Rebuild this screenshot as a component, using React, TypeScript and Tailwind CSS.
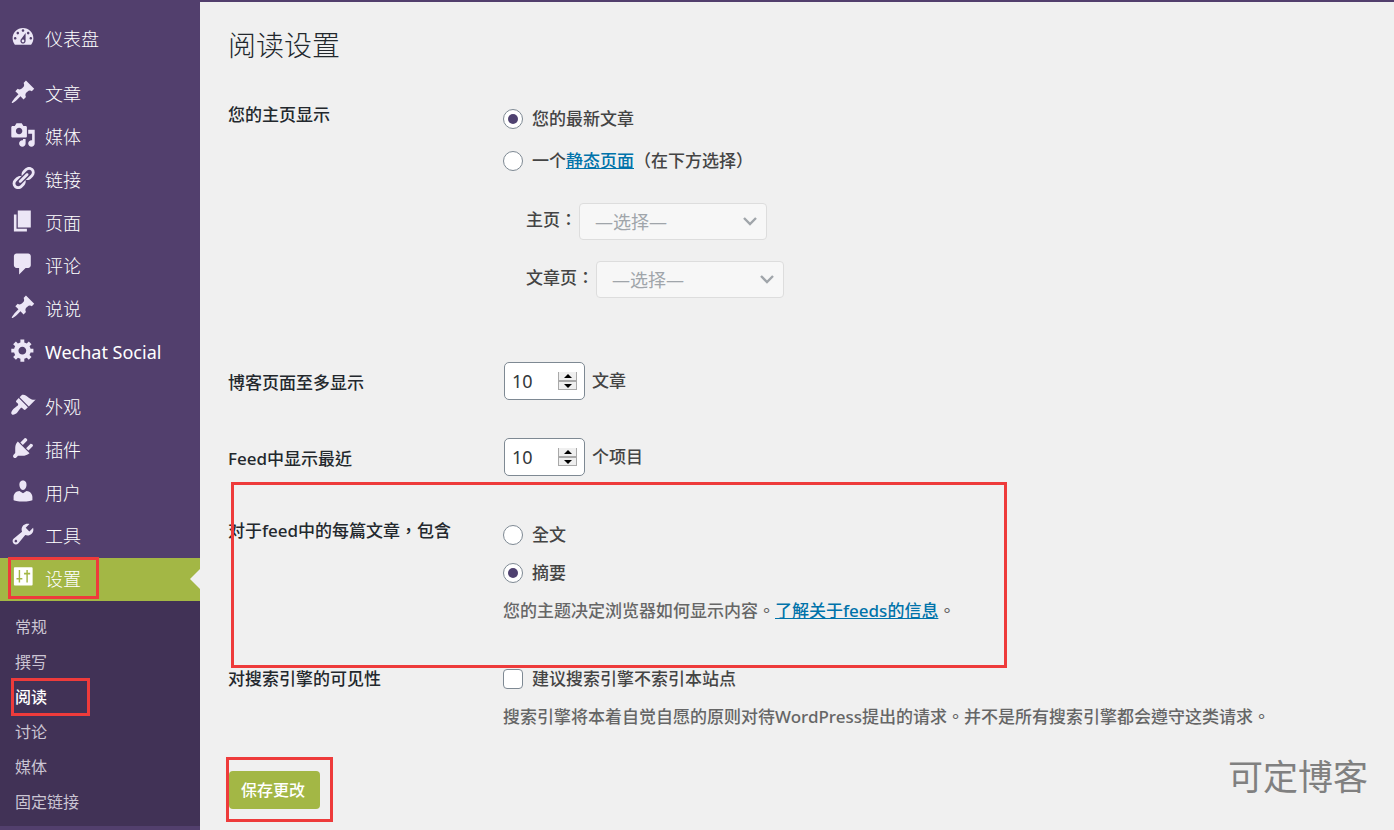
import { useState } from 'react'
import type { ReactNode } from 'react'
import clsx from 'clsx'

const iconPaths: Record<string, string> = {
  dashboard:
    'M3.76 16h12.48c1.1-1.37 1.76-3.11 1.76-5 0-4.42-3.58-8-8-8s-8 3.58-8 8c0 1.89.66 3.63 1.76 5zM10 4c.55 0 1 .45 1 1s-.45 1-1 1-1-.45-1-1 .45-1 1-1zM6 6c.55 0 1 .45 1 1s-.45 1-1 1-1-.45-1-1 .45-1 1-1zm8 0c.55 0 1 .45 1 1s-.45 1-1 1-1-.45-1-1 .45-1 1-1zm-5.37 5.55L12 7v6c0 1.1-.9 2-2 2s-2-.9-2-2c0-.57.24-1.08.63-1.45zM4 10c.55 0 1 .45 1 1s-.45 1-1 1-1-.45-1-1 .45-1 1-1zm12 0c.55 0 1 .45 1 1s-.45 1-1 1-1-.45-1-1 .45-1 1-1zm-5 3c0-.55-.45-1-1-1s-1 .45-1 1 .45 1 1 1 1-.45 1-1z',
  post: 'M10.44 3.02l1.82-1.82 6.36 6.35-1.83 1.82c-1.05-.68-2.48-.57-3.41.36l-.75.75c-.92.93-1.04 2.35-.35 3.41l-1.83 1.82-2.41-2.41-2.8 2.79c-.42.42-3.38 2.71-3.8 2.29s1.86-3.39 2.28-3.81l2.79-2.79L4.1 9.36l1.83-1.82c1.05.69 2.48.57 3.4-.36l.75-.75c.93-.92 1.05-2.35.36-3.41z',
  media:
    'M13 11V4c0-.55-.45-1-1-1h-1.67L9 1H5L3.67 3H2c-.55 0-1 .45-1 1v7c0 .55.45 1 1 1h10c.55 0 1-.45 1-1zM7 4.5c1.38 0 2.5 1.12 2.5 2.5S8.38 9.5 7 9.5 4.5 8.38 4.5 7 5.62 4.5 7 4.5zM14 6h5v10.5c0 1.38-1.12 2.5-2.5 2.5S14 17.88 14 16.5s1.12-2.5 2.5-2.5c.17 0 .34.02.5.05V9h-3V6zm-4 8.05V13h2v3.5c0 1.38-1.12 2.5-2.5 2.5S7 17.88 7 16.5 8.12 14 9.5 14c.17 0 .34.02.5.05z',
  link: 'M17.74 2.76c1.68 1.69 1.68 4.41 0 6.1l-1.53 1.52c-1.12 1.12-2.7 1.47-4.14 1.09l2.62-2.61.76-.77.76-.76c.84-.84.84-2.2 0-3.04-.84-.85-2.2-.85-3.04 0l-.77.76-3.38 3.38c-.37-1.44-.02-3.02 1.1-4.14l1.52-1.53c1.69-1.68 4.42-1.68 6.1 0zM8.59 13.43l5.34-5.34c.42-.42.42-1.1 0-1.52-.44-.43-1.13-.39-1.53 0l-5.33 5.34c-.42.42-.42 1.1 0 1.52.44.43 1.13.39 1.52 0zm-.76 2.29l4.14-4.15c.38 1.44.03 3.02-1.09 4.14l-1.52 1.53c-1.69 1.68-4.41 1.68-6.1 0-1.68-1.68-1.68-4.42 0-6.1l1.53-1.52c1.12-1.12 2.7-1.47 4.14-1.1l-4.14 4.15c-.85.84-.85 2.2 0 3.05.84.84 2.2.84 3.04 0z',
  page: 'M6 15V2h10v13H6zm-1 1h8v2H3V5h2v11z',
  comment: 'M5 2h9c1.1 0 2 .9 2 2v7c0 1.1-.9 2-2 2h-2l-5 5v-5H5c-1.1 0-2-.9-2-2V4c0-1.1.9-2 2-2z',
  generic:
    'M18 12h-2.18c-.17.7-.44 1.35-.81 1.93l1.54 1.54-2.1 2.1-1.54-1.54c-.58.36-1.23.63-1.91.79V19H8v-2.18c-.68-.16-1.33-.43-1.91-.79l-1.54 1.54-2.12-2.12 1.54-1.54c-.36-.58-.63-1.23-.79-1.91H1V9.03h2.17c.16-.7.44-1.35.8-1.94L2.43 5.55l2.1-2.1 1.54 1.54c.58-.37 1.24-.64 1.93-.81V2h3v2.18c.68.16 1.33.43 1.91.79l1.54-1.54 2.12 2.12-1.54 1.54c.36.59.64 1.24.8 1.94H18V12zm-8.5 1.5c1.66 0 3-1.34 3-3s-1.34-3-3-3-3 1.34-3 3 1.34 3 3 3z',
  appearance:
    'M14.48 11.06L7.41 3.99l1.5-1.5c.5-.56 2.3-.47 3.51.32 1.21.8 1.43 1.28 2.91 2.1 1.18.64 2.45 1.26 4.45.85zm-.71.71L6.7 4.7 4.93 6.47c-.39.39-.39 1.02 0 1.41l1.06 1.06c.39.39.39 1.03 0 1.42-.6.6-1.43 1.11-2.21 1.69-.35.26-.7.53-1.01.84C1.43 14.23.4 16.08 1.4 17.07c.99 1 2.84-.03 4.18-1.36.31-.31.58-.66.85-1.02.57-.78 1.08-1.61 1.69-2.21.39-.39 1.02-.39 1.41 0l1.06 1.06c.39.39 1.02.39 1.41 0z',
  plugin:
    'M13.11 4.36L9.87 7.6 8 5.73l3.24-3.24c.35-.34 1.05-.2 1.56.32.52.51.66 1.21.31 1.55zm-8 1.77l.91-1.12 9.01 9.01-1.19.84c-.71.71-2.63 1.16-3.82 1.16H6.14L4.9 17.26c-.59.59-1.54.59-2.12 0-.59-.58-.59-1.53 0-2.12l1.24-1.24v-3.88c0-1.13.4-3.19 1.09-3.89zm7.26 3.97l3.24-3.24c.34-.35 1.04-.21 1.55.31.52.51.66 1.21.31 1.55l-3.24 3.25z',
  user: 'M10 9.25c-2.27 0-2.73-3.44-2.73-3.44C7 4.02 7.82 2 9.97 2c2.16 0 2.98 2.02 2.71 3.81 0 0-.41 3.44-2.68 3.44zm0 2.57L12.72 10c2.39 0 4.52 2.33 4.52 4.53v2.49s-3.65 1.13-7.24 1.13c-3.65 0-7.24-1.13-7.24-1.13v-2.49c0-2.25 1.94-4.48 4.47-4.48z',
  tools:
    'M16.68 9.77c-1.34 1.34-3.3 1.67-4.95.99l-5.41 6.52c-.99.99-2.59.99-3.58 0s-.99-2.59 0-3.57l6.52-5.42c-.68-1.65-.35-3.61.99-4.95 1.28-1.28 3.12-1.62 4.72-1.06l-2.89 2.89 2.82 2.82 2.86-2.87c.53 1.58.18 3.39-1.08 4.65zM3.81 16.21c.4.39 1.04.39 1.43 0 .4-.4.4-1.04 0-1.43-.39-.4-1.03-.4-1.43 0-.39.39-.39 1.03 0 1.43z',
  settings:
    'M3.7 2.5h13a.7.7 0 0 1 .7.7v12.6a.7.7 0 0 1-.7.7h-13a.7.7 0 0 1-.7-.7V3.2a.7.7 0 0 1 .7-.7zM6.7 4.6v6.1H5v1.3h1.7v2.2h1.1V12h1.7v-1.3H7.8V4.6zM12.6 4.6v2.2h-1.8v1.3h1.8v6.1h1.1V8.1h1.8V6.8h-1.8V4.6z',
}

const menuGroups = [
  [{ icon: 'dashboard', label: '仪表盘' }],
  [
    { icon: 'post', label: '文章' },
    { icon: 'media', label: '媒体' },
    { icon: 'link', label: '链接' },
    { icon: 'page', label: '页面' },
    { icon: 'comment', label: '评论' },
    { icon: 'post', label: '说说' },
    { icon: 'generic', label: 'Wechat Social' },
  ],
  [
    { icon: 'appearance', label: '外观' },
    { icon: 'plugin', label: '插件' },
    { icon: 'user', label: '用户' },
    { icon: 'tools', label: '工具' },
    { icon: 'settings', label: '设置' },
  ],
]

const submenu = ['常规', '撰写', '阅读', '讨论', '媒体', '固定链接']

function Frame({ className }: { className: string }) {
  return <span className={clsx('absolute border-3 border-[#ee3b3b] pointer-events-none', className)} />
}

function MenuItem({ icon, label }: { icon: string; label: string }) {
  const current = label === '设置'
  const latin = /^[A-Za-z ]+$/.test(label)
  return (
    <li>
      <a
        href="#"
        aria-current={current ? 'true' : undefined}
        className={clsx('relative flex items-center h-[43px] pl-[10px] gap-[9px] text-white', current && 'bg-[#a3b745]')}
      >
        <svg viewBox="0 0 20 20" className={clsx('size-[26px] mb-1.5 shrink-0', current ? 'fill-white' : 'fill-[#ece6f6]')} aria-hidden="true">
          <path fillRule="evenodd" d={iconPaths[icon]} />
        </svg>
        <span className={clsx(latin && 'font-normal')}>{label}</span>
        {current && (
          <>
            <span className="absolute right-0 top-[11px] border-y-10 border-y-transparent border-r-10 border-r-[#f0f0f0]" />
            <Frame className="left-2 -top-px w-[91px] h-[42px]" />
          </>
        )}
      </a>
    </li>
  )
}

function Sidebar() {
  return (
    <nav className="w-[200px] shrink-0 bg-[#523f6d] pt-4 text-[18px] font-light">
      {menuGroups.map((group, i) => (
        <ul key={i} className={i > 0 ? 'mt-3' : ''}>
          {group.map((item, j) => <MenuItem key={j} {...item} />)}
        </ul>
      ))}
      <ul className="bg-[#413256] pt-2 pb-[7px] text-[16px] font-normal">
        {submenu.map(s => (
          <li key={s}>
            <a
              href="#"
              className={clsx('relative flex items-center h-[35px] pl-[15px]', s === '阅读' ? 'text-white font-medium' : 'text-[#cbc5d3]')}
            >
              {s}
              {s === '阅读' && <Frame className="left-[11px] -top-px w-[79px] h-[38px]" />}
            </a>
          </li>
        ))}
      </ul>
    </nav>
  )
}

function Row({ label, htmlFor, className, children }: { label: string; htmlFor?: string; className: string; children: ReactNode }) {
  return (
    <div className="grid grid-cols-[275px_1fr]">
      {htmlFor
        ? <label htmlFor={htmlFor} className="pt-6 text-[#23282d]">{label}</label>
        : <div className="pt-6 text-[#23282d]">{label}</div>}
      <div className={className}>{children}</div>
    </div>
  )
}

function Radio({ id, name, defaultChecked, children }: { id: string; name: string; defaultChecked?: boolean; children: ReactNode }) {
  return (
    <div className="flex items-center gap-[9px]">
      <input
        id={id}
        type="radio"
        name={name}
        defaultChecked={defaultChecked}
        className="appearance-none size-5 shrink-0 rounded-full border border-[#7e8993] bg-white flex items-center justify-center checked:before:block checked:before:size-[10px] checked:before:rounded-full checked:before:bg-[#4f4170]"
      />
      <label htmlFor={id}>{children}</label>
    </div>
  )
}

function PageSelect({ id, label }: { id: string; label: string }) {
  return (
    <div className="flex items-center gap-0.5">
      <label htmlFor={id} className="pb-1">{label}</label>
      <div className="relative">
        <select id={id} disabled className="appearance-none w-[188px] h-[37px] pl-[15px] rounded border border-[#dddddd] bg-[#f7f7f7] text-[18px] font-normal text-[#a0a5aa] opacity-100">
          <option>—选择—</option>
        </select>
        <svg viewBox="0 0 14 9" className="absolute right-[10px] top-[14px] w-[14px] h-[9px]" fill="none" stroke="#a0a5aa" strokeWidth="2.4" aria-hidden="true">
          <path d="M1 1l6 6 6-6" />
        </svg>
      </div>
    </div>
  )
}

function NumberField({ id, unit }: { id: string; unit: string }) {
  const [value, setValue] = useState(10)
  return (
    <div className="flex items-center gap-[7px] pl-px">
      <div className="relative">
        <input
          id={id}
          type="number"
          value={value}
          onChange={e => setValue(Number(e.target.value))}
          className="w-[81px] h-[38px] pl-[7px] rounded-[5px] border border-[#7e8993] bg-white text-[18px] font-normal text-[#32373c] [appearance:textfield] [&::-webkit-inner-spin-button]:appearance-none"
        />
        <div className="absolute right-2 top-[10px] flex flex-col w-[19px]">
          <button type="button" aria-label="增加" onClick={() => setValue(value + 1)} className="flex items-center justify-center h-[9px] border-x border-b border-[#a9a9a9] bg-[#efefef]">
            <svg viewBox="0 0 8 4" className="w-2 h-1"><path d="M0 4l4-4 4 4z" /></svg>
          </button>
          <button type="button" aria-label="减少" onClick={() => setValue(value - 1)} className="flex items-center justify-center h-[9px] border border-[#a9a9a9] bg-[#efefef]">
            <svg viewBox="0 0 8 4" className="w-2 h-1"><path d="M0 0l4 4 4-4z" /></svg>
          </button>
        </div>
      </div>
      <span>{unit}</span>
    </div>
  )
}

export default function App() {
  return (
    <div className="relative min-h-screen flex flex-col bg-[#f0f0f0] font-['Noto_Sans','Noto_Sans_CJK_TC',sans-serif] text-[#444444]">
      <header className="h-[2px] bg-[#523f6d]" />
      <div className="flex flex-1">
        <Sidebar />
        <main className="flex-1 pl-7 pr-5 pt-5 text-[17px] leading-[26px] font-medium">
          <h1 className="text-[28px] leading-[46px] font-light text-[#23282d]">阅读设置</h1>
          <form className="pt-[10px]" onSubmit={e => e.preventDefault()}>
            <Row label="您的主页显示" className="pt-7 pb-12">
              <div className="flex flex-col gap-4">
                <Radio id="front-posts" name="show_on_front" defaultChecked>您的最新文章</Radio>
                <Radio id="front-page" name="show_on_front">
                  一个<a href="#" className="text-[#0073aa] underline">静态页面</a>（在下方选择）
                </Radio>
              </div>
              <div className="flex flex-col gap-[21px] pt-[29px] pl-[23px]">
                <PageSelect id="page-on-front" label="主页：" />
                <PageSelect id="page-for-posts" label="文章页：" />
              </div>
            </Row>
            <Row label="博客页面至多显示" htmlFor="posts-per-page" className="pt-4 pb-[22px]">
              <NumberField id="posts-per-page" unit="文章" />
            </Row>
            <Row label="Feed中显示最近" htmlFor="posts-per-rss" className="pt-4 pb-[18px]">
              <NumberField id="posts-per-rss" unit="个项目" />
            </Row>
            <div className="relative">
              <Row label="对于feed中的每篇文章，包含" className="pt-7 pb-[18px]">
                <div className="flex flex-col gap-3">
                  <Radio id="feed-full" name="rss_use_excerpt">全文</Radio>
                  <Radio id="feed-summary" name="rss_use_excerpt" defaultChecked>摘要</Radio>
                  <p className="text-[#666666]">
                    您的主题决定浏览器如何显示内容。<a href="#" className="text-[#0073aa] underline">了解关于feeds的信息</a>。
                  </p>
                </div>
              </Row>
              <Frame className="left-[3px] -top-3 w-[776px] h-[186px]" />
            </div>
            <Row label="对搜索引擎的可见性" className="pt-6">
              <div className="flex flex-col gap-3">
                <div className="flex items-center gap-[9px]">
                  <input id="blog-public" type="checkbox" className="appearance-none size-5 shrink-0 rounded border border-[#7e8993] bg-white checked:bg-[#4f4170]" />
                  <label htmlFor="blog-public">建议搜索引擎不索引本站点</label>
                </div>
                <p className="text-[#666666]">搜索引擎将本着自觉自愿的原则对待WordPress提出的请求。并不是所有搜索引擎都会遵守这类请求。</p>
              </div>
            </Row>
            <div className="relative mt-[41px]">
              <button type="submit" className="h-[38px] pl-3 pr-[15px] ml-px rounded bg-[#a3b745] text-[16px] text-white">保存更改</button>
              <Frame className="-left-[2px] -top-[14px] w-[107px] h-[65px]" />
            </div>
          </form>
        </main>
      </div>
      <div className="absolute right-[26px] bottom-[28px] text-[35px] leading-[50px] text-[#808080]">可定博客</div>
    </div>
  )
}
